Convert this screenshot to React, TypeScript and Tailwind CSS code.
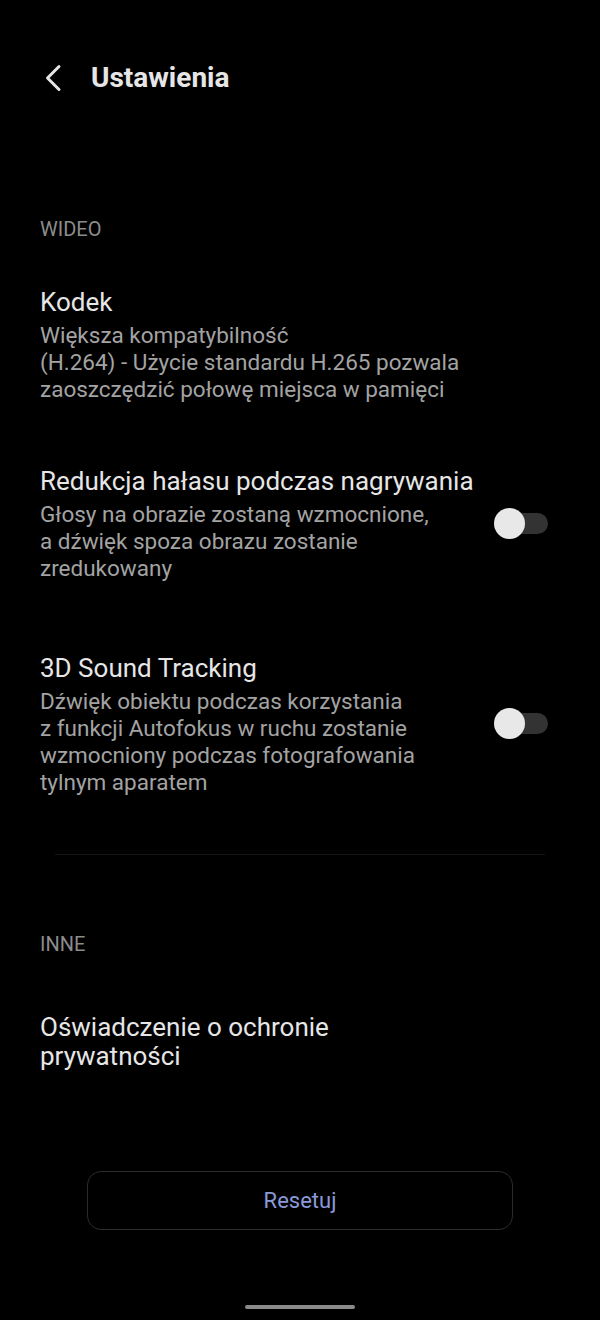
import { useState } from "react";

function Toggle({ on, onChange }: { on: boolean; onChange: () => void }) {
  return (
    <button
      type="button"
      onClick={onChange}
      className="relative h-[32px] w-[56px] shrink-0"
      aria-pressed={on}
    >
      <span className="absolute left-[15px] top-[5px] h-[21px] w-[39px] rounded-full bg-[#333333]" />
      <span
        className={
          on
            ? "absolute left-[24px] top-0 h-[31px] w-[31px] rounded-full bg-[#e8e8e8]"
            : "absolute left-0 top-0 h-[31px] w-[31px] rounded-full bg-[#e8e8e8]"
        }
      />
    </button>
  );
}

function SectionLabel({ children, className }: { children: string; className: string }) {
  return (
    <div className={"px-[40px] text-[20px] leading-[24px] text-[#8c8c8c] " + className}>
      {children}
    </div>
  );
}

export default function App() {
  const [noise, setNoise] = useState(false);
  const [tracking, setTracking] = useState(false);

  return (
    <div
      className="flex h-[1320px] w-[600px] flex-col bg-black"
      style={{ fontFamily: "Roboto, 'Noto Sans', sans-serif" }}
    >
      <header className="mt-[50px] flex h-[56px] items-center">
        <button type="button" className="ml-[43px] flex h-[32px] w-[24px] items-center">
          <svg width="20" height="28" viewBox="0 0 20 28" fill="none">
            <path
              d="M16 2.5 L4.5 14 L16 25.5"
              stroke="#e6e6e6"
              strokeWidth="3"
              strokeLinecap="round"
              strokeLinejoin="round"
            />
          </svg>
        </button>
        <h1 className="ml-[24px] text-[28px] font-bold text-[#e6e6e6]">Ustawienia</h1>
      </header>

      <SectionLabel className="mt-[111px]">WIDEO</SectionLabel>

      <div className="mt-[45px] px-[40px]">
        <div className="text-[26px] leading-[32px] text-[#e6e6e6]">Kodek</div>
        <div className="mt-[4px] text-[22.5px] leading-[27px] text-[#a3a3a3]">
          Większa kompatybilność
          <br />
          (H.264) - Użycie standardu H.265 pozwala
          <br />
          zaoszczędzić połowę miejsca w pamięci
        </div>
      </div>

      <div className="mt-[62px] flex items-center pl-[40px] pr-[50px]">
        <div className="flex-1">
          <div className="text-[26px] leading-[32px] text-[#e6e6e6]">
            Redukcja hałasu podczas nagrywania
          </div>
          <div className="mt-[4px] text-[22.5px] leading-[27px] text-[#a3a3a3]">
            Głosy na obrazie zostaną wzmocnione,
            <br />
            a dźwięk spoza obrazu zostanie
            <br />
            zredukowany
          </div>
        </div>
        <Toggle on={noise} onChange={() => setNoise(!noise)} />
      </div>

      <div className="mt-[70px] flex items-center pl-[40px] pr-[50px]">
        <div className="flex-1">
          <div className="text-[26px] leading-[32px] text-[#e6e6e6]">3D Sound Tracking</div>
          <div className="mt-[4px] text-[22.5px] leading-[27px] text-[#a3a3a3]">
            Dźwięk obiektu podczas korzystania
            <br />
            z funkcji Autofokus w ruchu zostanie
            <br />
            wzmocniony podczas fotografowania
            <br />
            tylnym aparatem
          </div>
        </div>
        <Toggle on={tracking} onChange={() => setTracking(!tracking)} />
      </div>

      <div className="mx-[55px] mt-[58px] h-px bg-[#161616]" />

      <SectionLabel className="mt-[77px]">INNE</SectionLabel>

      <div className="mt-[57px] px-[40px] text-[26px] leading-[29px] text-[#e6e6e6]">
        Oświadczenie o ochronie
        <br />
        prywatności
      </div>

      <div className="mt-[100px] flex justify-center">
        <button
          type="button"
          className="h-[59px] w-[426px] rounded-[14px] border border-[#2c2c2c] text-[22px] text-[#8a9ad8]"
        >
          Resetuj
        </button>
      </div>

      <div className="mt-auto mb-[11px] flex justify-center">
        <div className="h-[4px] w-[110px] rounded-full bg-[#8a8a8a]" />
      </div>
    </div>
  );
}
